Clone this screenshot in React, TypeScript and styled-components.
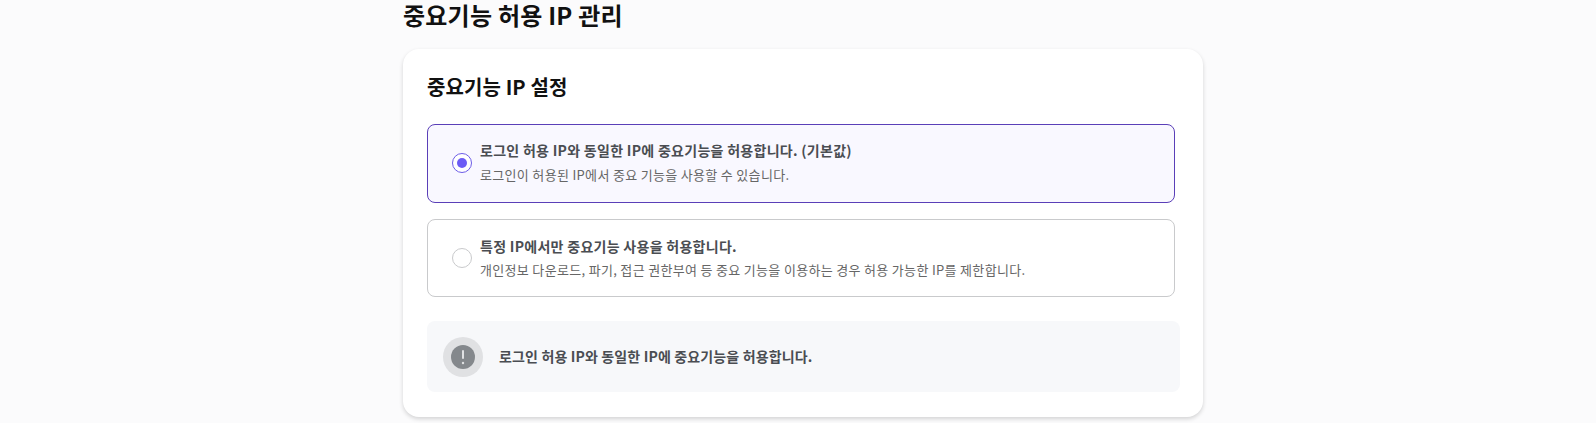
import * as React from 'react';
import styled, { createGlobalStyle } from 'styled-components';

const GlobalStyle = createGlobalStyle`
  html, body {
    margin: 0;
    padding: 0;
    height: 423px;
    overflow: hidden;
    background: #fbfbfc;
    font-family: "Noto Sans CJK KR", "Noto Sans", sans-serif;
  }
`;

const Page = styled.div`
  width: 800px;
  margin-left: 403px;
`;

const PageTitle = styled.h1`
  margin: 0;
  height: 49px;
  font-size: 24px;
  line-height: 30px;
  font-weight: 700;
  letter-spacing: 0.23px;
  color: #111;
`;

const Card = styled.section`
  display: flex;
  flex-direction: column;
  height: 368px;
  box-sizing: border-box;
  padding: 24px;
  background: #fff;
  border-radius: 16px;
  box-shadow: 0 2px 4px rgba(0, 0, 0, 0.16);
`;

const CardTitle = styled.h2`
  margin: 0 0 24px;
  height: 27px;
  font-size: 20px;
  line-height: 27px;
  font-weight: 700;
  letter-spacing: 0.1px;
  color: #111;
`;

const Options = styled.div`
  display: flex;
  flex-direction: column;
  gap: 16px;
  width: 748px;
`;

const Option = styled.label<{ $selected?: boolean }>`
  display: flex;
  align-items: center;
  gap: 8px;
  height: 78.6px;
  box-sizing: border-box;
  padding: 0 24px;
  border: 1px solid ${p => (p.$selected ? '#5a3fb8' : '#c9cacc')};
  border-radius: 8px;
  background: ${p => (p.$selected ? '#f9f8ff' : '#fff')};
`;

const Radio = styled.span<{ $selected?: boolean }>`
  display: flex;
  align-items: center;
  justify-content: center;
  flex: none;
  width: 20px;
  height: 20px;
  box-sizing: border-box;
  border-radius: 50%;
  border: ${p => (p.$selected ? '1.5px solid #6c5ce7' : '1px solid #c9cacc')};
  background: #fff;

  &::after {
    content: '';
    display: ${p => (p.$selected ? 'block' : 'none')};
    width: 10px;
    height: 10px;
    border-radius: 50%;
    background: #6c5cf5;
  }
`;

const OptionText = styled.div<{ $selected?: boolean }>`
  display: flex;
  flex-direction: column;
  gap: ${p => (p.$selected ? '4px' : '3px')};
  padding-bottom: ${p => (p.$selected ? '2px' : '0')};
`;

const OptionTitle = styled.div`
  font-size: 14px;
  line-height: 21px;
  font-weight: 700;
  letter-spacing: 0.28px;
  color: #4a4d52;
`;

const OptionDesc = styled.div`
  font-size: 13px;
  line-height: 19px;
  letter-spacing: 0.32px;
  color: #666;
`;

const Notice = styled.div`
  display: flex;
  align-items: center;
  gap: 16px;
  width: 753px;
  height: 71px;
  box-sizing: border-box;
  margin-top: 24px;
  padding: 0 16px;
  border-radius: 8px;
  background: #f7f8fa;
`;

const NoticeIcon = styled.svg`
  flex: none;
  width: 40px;
  height: 40px;
`;

const NoticeText = styled.div`
  font-size: 14px;
  line-height: 21px;
  font-weight: 700;
  letter-spacing: 0.14px;
  color: #4a4d52;
`;

const options = [
  {
    title: '로그인 허용 IP와 동일한 IP에 중요기능을 허용합니다. (기본값)',
    desc: '로그인이 허용된 IP에서 중요 기능을 사용할 수 있습니다.',
    selected: true,
  },
  {
    title: '특정 IP에서만 중요기능 사용을 허용합니다.',
    desc: '개인정보 다운로드, 파기, 접근 권한부여 등 중요 기능을 이용하는 경우 허용 가능한 IP를 제한합니다.',
    selected: false,
  },
];

export default function App() {
  return (
    <Page>
      <GlobalStyle />
      <PageTitle>중요기능 허용 IP 관리</PageTitle>
      <Card>
        <CardTitle>중요기능 IP 설정</CardTitle>
        <Options>
          {options.map(o => (
            <Option key={o.title} $selected={o.selected}>
              <Radio $selected={o.selected} />
              <OptionText $selected={o.selected}>
                <OptionTitle>{o.title}</OptionTitle>
                <OptionDesc>{o.desc}</OptionDesc>
              </OptionText>
            </Option>
          ))}
        </Options>
        <Notice>
          <NoticeIcon viewBox="0 0 40 40">
            <circle cx="20" cy="20" r="20" fill="#e0e1e3" />
            <circle cx="20" cy="20" r="12" fill="#84888c" />
            <rect x="19" y="13" width="2" height="9" rx="1" fill="#e0e1e3" />
            <circle cx="20" cy="26" r="1.2" fill="#e0e1e3" />
          </NoticeIcon>
          <NoticeText>로그인 허용 IP와 동일한 IP에 중요기능을 허용합니다.</NoticeText>
        </Notice>
      </Card>
    </Page>
  );
}
